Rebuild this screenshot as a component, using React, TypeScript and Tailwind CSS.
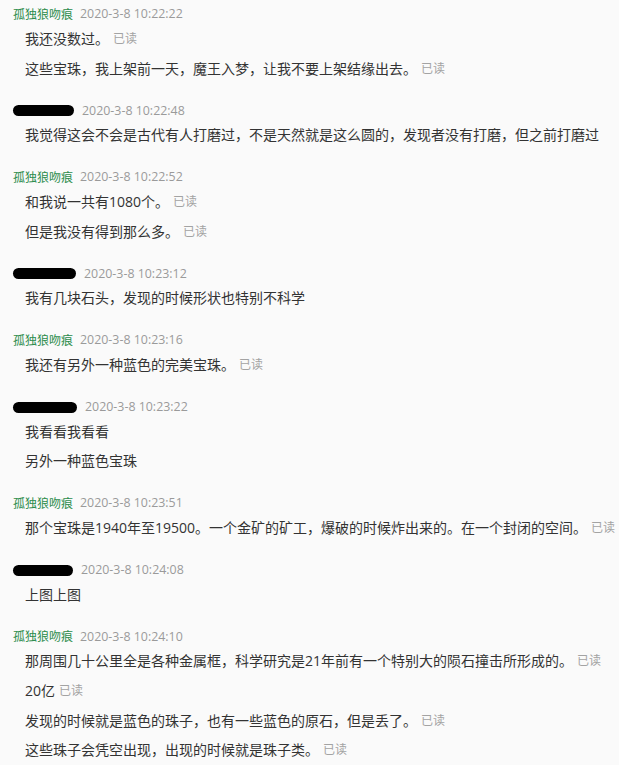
type Message = { text: string; read?: boolean };

type Group = {
  sender: string | null; // null = redacted
  blobWidth?: number;
  time: string;
  messages: Message[];
};

const groups: Group[] = [
  {
    sender: "孤独狼吻痕",
    time: "2020-3-8 10:22:22",
    messages: [
      { text: "我还没数过。", read: true },
      { text: "这些宝珠，我上架前一天，魔王入梦，让我不要上架结缘出去。", read: true },
    ],
  },
  {
    sender: null,
    blobWidth: 61,
    time: "2020-3-8 10:22:48",
    messages: [
      { text: "我觉得这会不会是古代有人打磨过，不是天然就是这么圆的，发现者没有打磨，但之前打磨过" },
    ],
  },
  {
    sender: "孤独狼吻痕",
    time: "2020-3-8 10:22:52",
    messages: [
      { text: "和我说一共有1080个。", read: true },
      { text: "但是我没有得到那么多。", read: true },
    ],
  },
  {
    sender: null,
    blobWidth: 63,
    time: "2020-3-8 10:23:12",
    messages: [{ text: "我有几块石头，发现的时候形状也特别不科学" }],
  },
  {
    sender: "孤独狼吻痕",
    time: "2020-3-8 10:23:16",
    messages: [{ text: "我还有另外一种蓝色的完美宝珠。", read: true }],
  },
  {
    sender: null,
    blobWidth: 64,
    time: "2020-3-8 10:23:22",
    messages: [{ text: "我看看我看看" }, { text: "另外一种蓝色宝珠" }],
  },
  {
    sender: "孤独狼吻痕",
    time: "2020-3-8 10:23:51",
    messages: [
      { text: "那个宝珠是1940年至19500。一个金矿的矿工，爆破的时候炸出来的。在一个封闭的空间。", read: true },
    ],
  },
  {
    sender: null,
    blobWidth: 60,
    time: "2020-3-8 10:24:08",
    messages: [{ text: "上图上图" }],
  },
  {
    sender: "孤独狼吻痕",
    time: "2020-3-8 10:24:10",
    messages: [
      { text: "那周围几十公里全是各种金属框，科学研究是21年前有一个特别大的陨石撞击所形成的。", read: true },
      { text: "20亿", read: true },
      { text: "发现的时候就是蓝色的珠子，也有一些蓝色的原石，但是丢了。", read: true },
      { text: "这些珠子会凭空出现，出现的时候就是珠子类。", read: true },
    ],
  },
];

const cjk = "font-['Open_Sans','Noto_Sans_CJK_SC',sans-serif]";

function SenderLine({ group }: { group: Group }) {
  return (
    <div className="flex h-[19px] items-center pl-[13px]">
      {group.sender ? (
        <span className={`${cjk} text-[12px] leading-none text-[#2c8c4c]`}>
          {group.sender}
        </span>
      ) : (
        <span
          className="h-[11px] rounded-full bg-black"
          style={{ width: group.blobWidth }}
        />
      )}
      <span
        className={`font-['Open_Sans',sans-serif] text-[12.4px] leading-none text-[#9a9a9a] ${
          group.sender ? "ml-[7px]" : "ml-[8px]"
        }`}
      >
        {group.time}
      </span>
    </div>
  );
}

export default function App() {
  return (
    <div className={`min-h-screen bg-[#fafafa] pt-[5px] ${cjk}`}>
      {groups.map((group, i) => (
        <div key={i} className="mb-[18px]">
          <SenderLine group={group} />
          {group.messages.map((m, j) => (
            <div key={j} className="flex h-[29.7px] items-center pl-[25px]">
              <span className="whitespace-nowrap text-[14px] leading-none text-[#333333]">
                {m.text}
              </span>
              {m.read && (
                <span className="ml-[4px] whitespace-nowrap text-[12px] leading-none text-[#a3a3a3]">
                  已读
                </span>
              )}
            </div>
          ))}
        </div>
      ))}
    </div>
  );
}
